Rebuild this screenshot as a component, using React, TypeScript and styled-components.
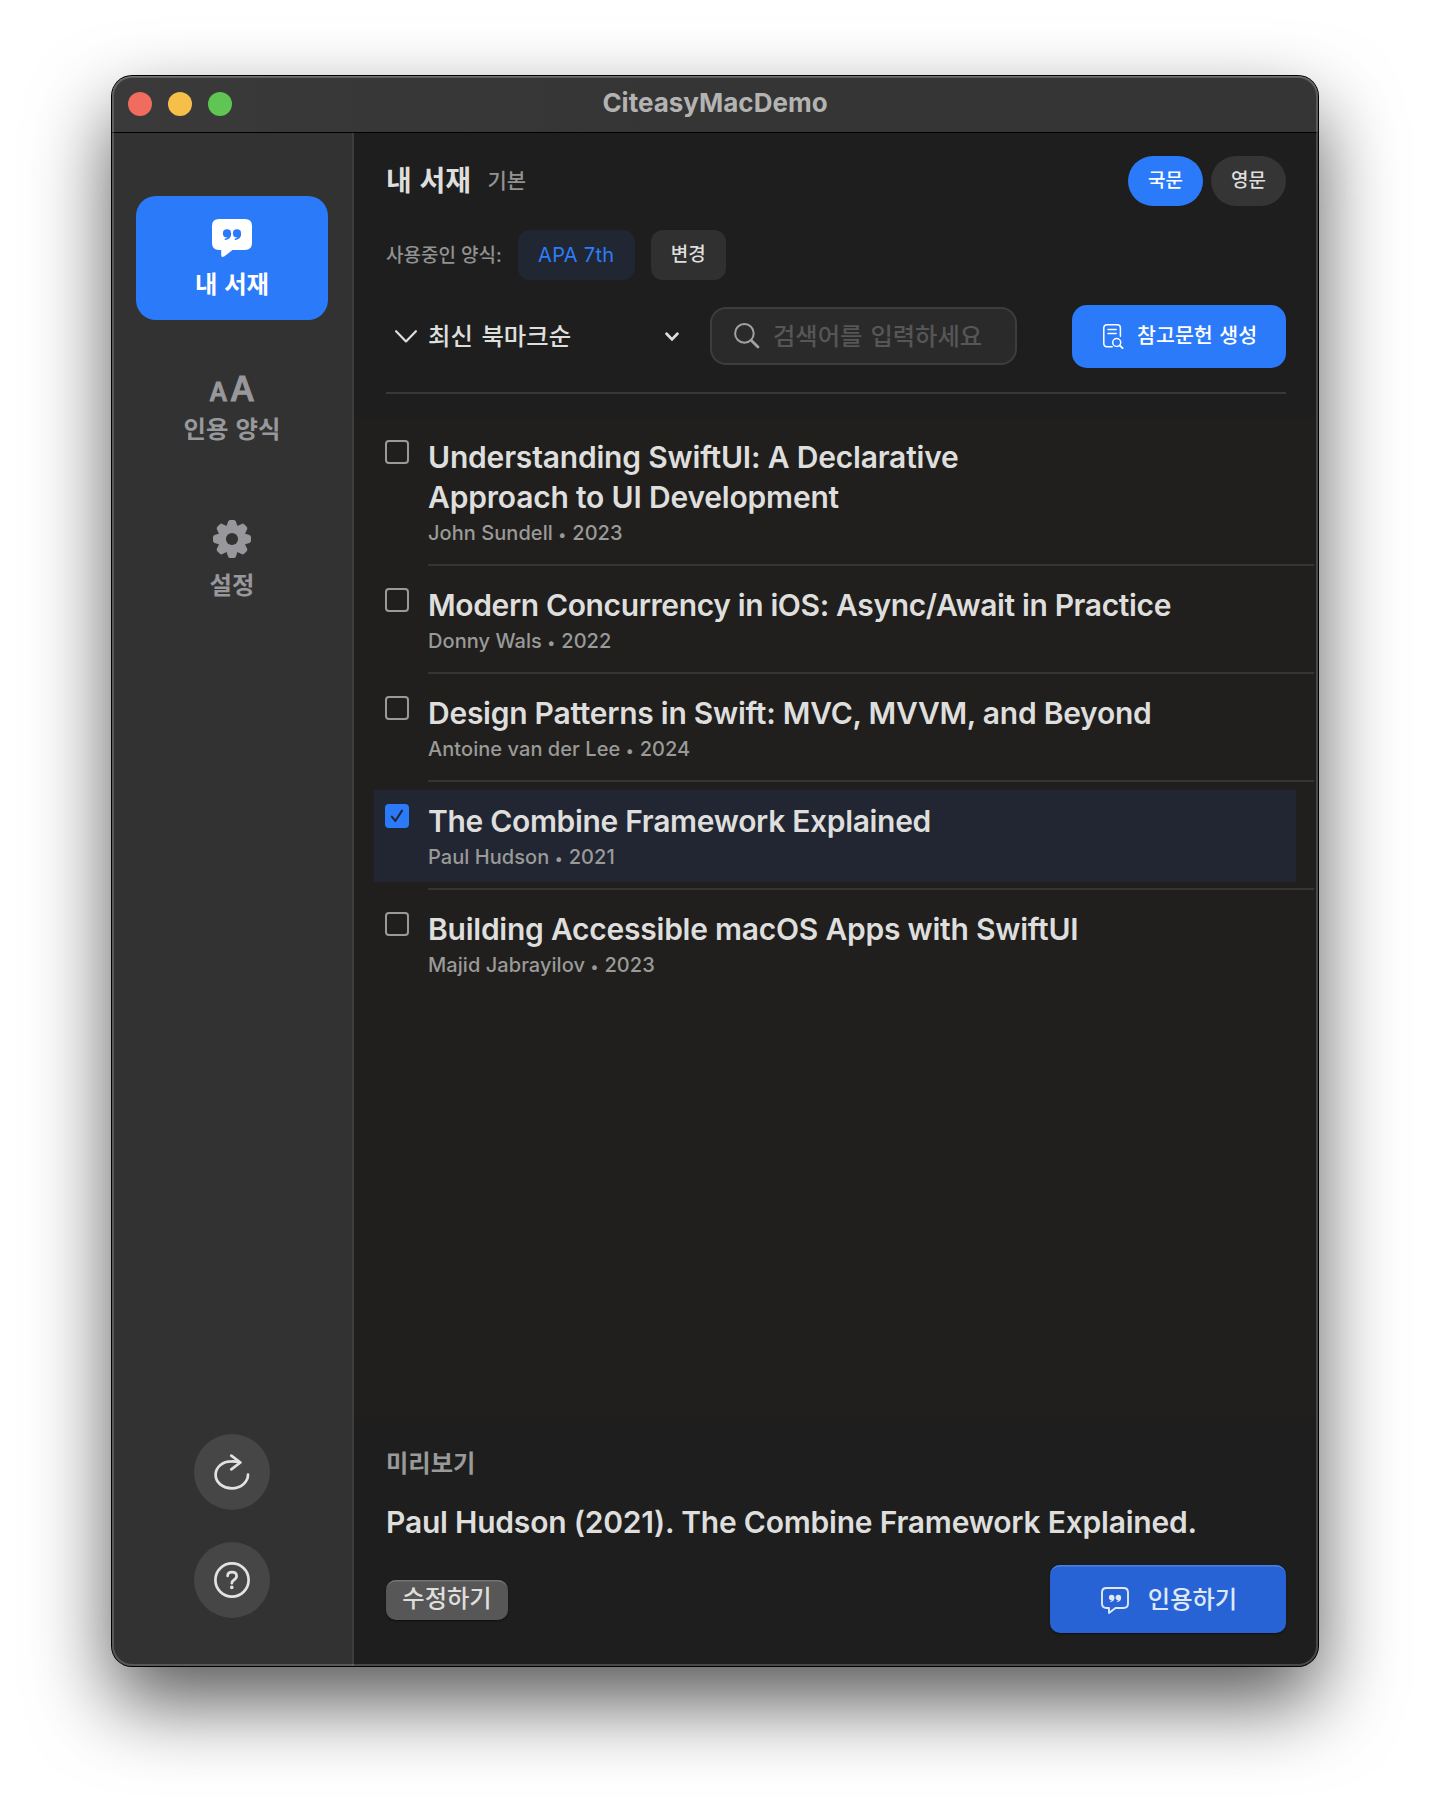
import React from "react";
import styled, { createGlobalStyle, css } from "styled-components";

const Global = createGlobalStyle`
  * { box-sizing: border-box; }
  html, body { margin: 0; padding: 0; background: #fff; }
  body {
    font-family: Inter, "Noto Sans CJK KR", sans-serif;
    color: #dededd;
    -webkit-font-smoothing: antialiased;
  }
  button, input { font: inherit; color: inherit; border: 0; margin: 0; padding: 0; background: none; }
  svg { display: block; flex: none; }
`;

const Desktop = styled.div`
  width: 1430px;
  height: 1814px;
  padding: 76px 112px 148px;
  overflow: hidden;
  background: #fff;
`;

const Window = styled.div`
  position: relative;
  width: 1206px;
  height: 1590px;
  display: flex;
  flex-direction: column;
  border-radius: 20px;
  background: #1e1e1e;
  box-shadow: 0 0 0 1px #000, 0 36px 80px rgba(0, 0, 0, 0.66);
  &::after {
    content: "";
    position: absolute;
    inset: 0;
    border-radius: 20px;
    pointer-events: none;
    box-shadow: inset 0 1px 0 rgba(255, 255, 255, 0.14), inset 0 0 0 2px rgba(255, 255, 255, 0.19);
  }
`;

const TitleBar = styled.header`
  height: 57px;
  flex: none;
  display: grid;
  grid-template-columns: 1fr auto 1fr;
  align-items: center;
  padding: 0 16px;
  border-radius: 20px 20px 0 0;
  border-bottom: 1px solid #000;
  background: linear-gradient(90deg, #3a3a3a, #353535 45%, #353535);
`;

const Lights = styled.div`
  display: flex;
  gap: 16px;
`;

const Light = styled.span<{ $color: string }>`
  width: 24px;
  height: 24px;
  border-radius: 50%;
  background: ${(p) => p.$color};
`;

const WindowTitle = styled.h1`
  margin: 0;
  padding-bottom: 3px;
  font-size: 26px;
  line-height: 32px;
  font-weight: 700;
  letter-spacing: 0;
  color: #b3b3b2;
`;

const Body = styled.div`
  flex: 1;
  min-height: 0;
  display: flex;
`;

const Sidebar = styled.nav`
  width: 242px;
  flex: none;
  display: flex;
  flex-direction: column;
  padding: 63px 24px 48px;
  gap: 24px;
  border-right: 2px solid #3e3e3e;
  border-radius: 0 0 0 20px;
  background: #323232;
`;

const NavItem = styled.button<{ $height: number; $gap: number; $active?: boolean }>`
  width: 192px;
  height: ${(p) => p.$height}px;
  display: flex;
  flex-direction: column;
  align-items: center;
  justify-content: flex-end;
  gap: ${(p) => p.$gap}px;
  padding-bottom: 19px;
  border-radius: 20px;
  font-size: 24.4px;
  line-height: 34px;
  font-weight: 600;
  word-spacing: 1px;
  color: #98989c;
  ${(p) =>
    p.$active &&
    css`
      background: #2b7af9;
      color: #fff;
      font-weight: 700;
    `}
`;

const LetterSizes = styled.span`
  display: flex;
  align-items: baseline;
  gap: 3px;
  line-height: 27px;
  height: 27px;
  font-weight: 500;
  -webkit-text-stroke: 1.2px currentColor;
  paint-order: stroke;
`;

const Letter = styled.span<{ $size: number }>`
  font-size: ${(p) => p.$size}px;
`;

const SidebarTools = styled.div`
  margin-top: auto;
  display: flex;
  flex-direction: column;
  align-items: center;
  gap: 32px;
`;

const RoundButton = styled.button`
  width: 76px;
  height: 76px;
  display: grid;
  place-items: center;
  border-radius: 50%;
  background: #464646;
  color: #e2e2e2;
`;

const Main = styled.main`
  flex: 1;
  min-width: 0;
  display: flex;
  flex-direction: column;
`;

const Header = styled.section`
  height: 285px;
  flex: none;
  display: flex;
  flex-direction: column;
  padding: 23px 32px 0;
`;

const Row = styled.div<{ $gap?: number; $height: number; $mt?: number }>`
  display: flex;
  align-items: center;
  height: ${(p) => p.$height}px;
  margin-top: ${(p) => p.$mt ?? 0}px;
  gap: ${(p) => p.$gap ?? 0}px;
`;

const Heading = styled.h2`
  margin: 0;
  font-size: 28px;
  line-height: 50px;
  font-weight: 700;
  word-spacing: 1px;
`;

const Muted = styled.span<{ $size: number }>`
  font-size: ${(p) => p.$size}px;
  line-height: 50px;
  font-weight: 500;
  color: #929291;
`;

const StyleLabel = styled(Muted)`
  padding-top: 1px;
`;

const Spacer = styled.div`
  flex: 1;
`;

const Pill = styled.button<{ $active?: boolean }>`
  width: 75px;
  height: 50px;
  border-radius: 25px;
  font-size: 19px;
  line-height: 50px;
  font-weight: 500;
  background: ${(p) => (p.$active ? "#2b7af9" : "#353535")};
  color: ${(p) => (p.$active ? "#fff" : "#dededd")};
`;

const Chip = styled.span<{ $width: number; $accent?: boolean }>`
  width: ${(p) => p.$width}px;
  height: 50px;
  border-radius: 12px;
  text-align: center;
  line-height: ${(p) => (p.$accent ? 51 : 50)}px;
  font-size: ${(p) => (p.$accent ? 20 : 19)}px;
  font-weight: ${(p) => (p.$accent ? 400 : 500)};
  letter-spacing: ${(p) => (p.$accent ? 0.3 : 0)}px;
  background: ${(p) => (p.$accent ? "#202733" : "#303030")};
  color: ${(p) => (p.$accent ? "#2e7cf6" : "#dededd")};
`;

const SortMenu = styled.button`
  width: 324px;
  height: 58px;
  display: flex;
  align-items: center;
  padding: 0 31px 0 9px;
  gap: 11px;
  font-size: 24.4px;
  line-height: 34px;
  font-weight: 500;
  word-spacing: 2px;
`;

const SortLabel = styled.span`
  padding-bottom: 2px;
`;

const SearchField = styled.label`
  width: 307px;
  height: 58px;
  margin-top: -1px;
  display: flex;
  align-items: center;
  gap: 13px;
  padding: 0 12px 0 22px;
  border: 2px solid #3d3d3d;
  border-radius: 16px;
  background: #2a2a2a;
  color: #a2a2a2;
`;

const SearchInput = styled.input`
  flex: 1;
  min-width: 0;
  height: 34px;
  font-size: 24.3px;
  line-height: 34px;
  font-weight: 500;
  word-spacing: 1.5px;
  outline: none;
  &::placeholder {
    color: #565656;
    opacity: 1;
  }
`;

const PrimaryButton = styled.button`
  width: 214px;
  height: 63px;
  margin-left: 55px;
  display: flex;
  align-items: center;
  gap: 13px;
  padding: 0 0 1px 31px;
  border-radius: 15px;
  font-size: 20.6px;
  font-weight: 500;
  word-spacing: 1px;
  line-height: 30px;
  white-space: nowrap;
  background: #2b7af9;
  color: #fff;
`;

const Rule = styled.hr`
  width: 100%;
  height: 2px;
  margin: 24px 0 0;
  border: 0;
  background: #383838;
`;

const List = styled.ul`
  flex: 1;
  min-height: 0;
  margin: 0;
  padding: 0;
  list-style: none;
  background: #201f1d;
`;

const Item = styled.li`
  padding: 8px 22px 6px 20px;
`;

const ItemInner = styled.div<{ $selected?: boolean }>`
  display: flex;
  gap: 19px;
  padding: 14px 12px 11px 11px;
  background: ${(p) => (p.$selected ? "#212632" : "transparent")};
`;

const Check = styled.span<{ $on?: boolean }>`
  width: 24px;
  height: 24px;
  flex: none;
  display: grid;
  place-items: center;
  border-radius: 4px;
  border: ${(p) => (p.$on ? "0" : "2px solid #9b9a99")};
  background: ${(p) => (p.$on ? "#2b7af9" : "transparent")};
  color: #212632;
`;

const ItemText = styled.div`
  display: flex;
  flex-direction: column;
  margin-top: -3px;
`;

const ItemTitle = styled.h3<{ $tracking: number }>`
  margin: 0;
  font-size: 30px;
  line-height: 40px;
  font-weight: 600;
  letter-spacing: ${(p) => p.$tracking}px;
  white-space: pre-line;
`;

const ItemMeta = styled.p`
  margin: 2px 0 0;
  height: 28px;
  font-size: 20px;
  line-height: 28px;
  letter-spacing: 0.06px;
  font-weight: 450;
  color: #9a9a98;
`;

const Dot = styled.span`
  font-size: 15px;
  line-height: 1;
  margin: 0 0.5px 0 0;
`;

const Separator = styled.li`
  height: 2px;
  margin: 0 4px 0 74px;
  background: #363533;
`;

const Preview = styled.footer`
  height: 250px;
  flex: none;
  display: flex;
  flex-direction: column;
  padding: 30px 32px 0;
`;

const PreviewLabel = styled.h4`
  margin: 0;
  font-size: 24.3px;
  line-height: 34px;
  font-weight: 600;
  color: #9a9a99;
`;

const Citation = styled.p`
  margin: 22px 0 0;
  font-size: 30px;
  line-height: 40px;
  font-weight: 600;
  letter-spacing: -0.21px;
  white-space: nowrap;
`;

const PreviewActions = styled.div`
  display: flex;
  align-items: center;
  justify-content: space-between;
  margin-top: 23px;
  height: 68px;
`;

const EditButton = styled.button`
  width: 122px;
  height: 40px;
  margin-top: 2px;
  border-radius: 10px;
  font-size: 24.3px;
  font-weight: 500;
  line-height: 36px;
  padding-bottom: 4px;
  background: #575757;
  box-shadow: inset 0 2px 0 -0.5px #747474, 0 1px 2px rgba(0, 0, 0, 0.5);
`;

const CiteButton = styled.button`
  width: 236px;
  height: 68px;
  display: flex;
  align-items: center;
  justify-content: center;
  gap: 19px;
  border-radius: 10px;
  font-size: 24.3px;
  font-weight: 500;
  line-height: 34px;
  padding: 0 0 1px 2px;
  background: #2863d6;
  color: #dfe8f9;
  box-shadow: inset 0 2px 0 -0.5px #4a80e4, 0 1px 2px rgba(0, 0, 0, 0.5);
  svg {
    margin-top: 4px;
  }
`;

const Quotes = () => (
  <>
    <circle cx="15" cy="14.4" r="4.1" />
    <path d="M19.1 14.2 C19.4 18 17 20.7 13.2 20.9 C12.4 20.9 12.4 19.8 13.2 19.6 C15 19.2 16 18 16.2 16.4 Z" />
    <circle cx="25" cy="14.4" r="4.1" />
    <path d="M29.1 14.2 C29.4 18 27 20.7 23.2 20.9 C22.4 20.9 22.4 19.8 23.2 19.6 C25 19.2 26 18 26.2 16.4 Z" />
  </>
);

const BubbleFilled = () => (
  <svg width="40" height="38" viewBox="0 0 40 38" fill="currentColor">
    <path d="M7 0 H33 Q40 0 40 7 V24 Q40 31 33 31 H20.5 L12.5 37.3 Q9.2 39 9.2 36 V31 H7 Q0 31 0 24 V7 Q0 0 7 0 Z" />
    <g fill="#2b7af9">
      <Quotes />
    </g>
  </svg>
);

const BubbleOutline = () => (
  <svg width="28" height="27" viewBox="0 0 28 27" fill="none" stroke="currentColor" strokeWidth="1.9" strokeLinejoin="round">
    <path d="M5.5 1 H22.5 Q27 1 27 5.5 V16.5 Q27 21 22.5 21 H14.5 L8 26 V21 H5.5 Q1 21 1 16.5 V5.5 Q1 1 5.5 1 Z" />
    <g fill="currentColor" stroke="none" transform="translate(0.6 0.9) scale(0.67)">
      <Quotes />
    </g>
  </svg>
);

const Gear = () => (
  <svg width="38" height="38" viewBox="-19 -19 38 38" fill="currentColor">
    <defs>
      <mask id="gear-hole">
        <rect x="-19" y="-19" width="38" height="38" fill="#fff" />
        <circle r="6.1" fill="#000" />
      </mask>
    </defs>
    <g mask="url(#gear-hole)">
      <circle r="14.2" />
      {[0, 45, 90, 135, 180, 225, 270, 315].map((a) => (
        <path key={a} transform={`rotate(${a})`} d="M-5.6 -12.5 L-3.9 -17.4 Q-3.4 -19 -1.8 -19 H1.8 Q3.4 -19 3.9 -17.4 L5.6 -12.5 Z" />
      ))}
    </g>
  </svg>
);

const Refresh = () => (
  <svg width="36" height="36" viewBox="0 0 36 36" fill="none" stroke="currentColor" strokeWidth="2.7" strokeLinecap="round" strokeLinejoin="round">
    <path d="M34 20.5 C34 28 27 34.3 18 34.3 C8.5 34.3 1.6 28.4 1.6 20.8 C1.6 13 8.5 7.4 17.5 7.4 Q21.5 7.2 25 8.2" />
    <path d="M17.3 1.6 L26.4 8.5 L17.3 15.3" />
  </svg>
);

const Help = () => (
  <svg width="36" height="36" viewBox="0 0 36 36" fill="none" stroke="currentColor" strokeWidth="2.7" strokeLinecap="round" strokeLinejoin="round">
    <circle cx="18" cy="18" r="16.6" />
    <path d="M13.6 13.9 C13.7 11.4 15.5 10.2 18 10.2 C20.7 10.2 22.6 11.6 22.6 14 C22.6 16 21.5 17 19.9 18 C18.4 18.9 17.8 19.7 17.8 21.2" />
    <circle cx="17.8" cy="25.4" r="1.8" fill="currentColor" stroke="none" />
  </svg>
);

const SearchIcon = () => (
  <svg width="26" height="26" viewBox="0 0 26 26" fill="none" stroke="currentColor" strokeLinecap="round">
    <circle cx="10.4" cy="10.4" r="9.3" strokeWidth="2" />
    <path d="M17.4 17.4 L24 24" strokeWidth="2.8" />
  </svg>
);

const WideChevron = () => (
  <svg width="22" height="13" viewBox="0 0 22 13" fill="none" stroke="currentColor" strokeWidth="2.2" strokeLinecap="round" strokeLinejoin="round">
    <path d="M1.1 1.2 L11 11.4 L20.9 1.2" />
  </svg>
);

const SmallChevron = () => (
  <svg width="14" height="10" viewBox="0 0 14 10" fill="none" stroke="currentColor" strokeWidth="2.8" strokeLinecap="round" strokeLinejoin="round">
    <path d="M1.6 1.8 L7 7.4 L12.4 1.8" />
  </svg>
);

const DocSearch = () => (
  <svg width="21" height="25" viewBox="0 0 21 25" fill="none" stroke="currentColor" strokeWidth="1.5" strokeLinecap="round" strokeLinejoin="round">
    <path d="M9.2 22.7 H4 Q0.8 22.7 0.8 19.5 V4 Q0.8 0.8 4 0.8 H14.2 Q17.4 0.8 17.4 4 V12.3" />
    <path d="M5 5.6 H13.2 M5 9.6 H13.2" />
    <circle cx="13.7" cy="18.5" r="4" />
    <path d="M16.7 21.5 L19.6 24.1" strokeWidth="1.8" />
  </svg>
);

const Tick = () => (
  <svg width="14" height="14" viewBox="0 0 14 14" fill="none" stroke="currentColor" strokeWidth="2" strokeLinecap="round" strokeLinejoin="round">
    <path d="M1.8 7.6 L5.4 12 L12 1.6" />
  </svg>
);

const papers = [
  { title: "Understanding SwiftUI: A Declarative\nApproach to UI Development", author: "John Sundell", year: 2023, tracking: -0.19 },
  { title: "Modern Concurrency in iOS: Async/Await in Practice", author: "Donny Wals", year: 2022, tracking: -0.37 },
  { title: "Design Patterns in Swift: MVC, MVVM, and Beyond", author: "Antoine van der Lee", year: 2024, tracking: -0.26 },
  { title: "The Combine Framework Explained", author: "Paul Hudson", year: 2021, tracking: -0.32, selected: true },
  { title: "Building Accessible macOS Apps with SwiftUI", author: "Majid Jabrayilov", year: 2023, tracking: -0.24 },
];

export default function App() {
  return (
    <Desktop>
      <Global />
      <Window>
        <TitleBar>
          <Lights>
            <Light $color="#f06c5e" />
            <Light $color="#f6bf4a" />
            <Light $color="#5fc553" />
          </Lights>
          <WindowTitle>CiteasyMacDemo</WindowTitle>
        </TitleBar>
        <Body>
          <Sidebar>
            <NavItem $active $height={124} $gap={10}>
              <BubbleFilled />
              내 서재
            </NavItem>
            <NavItem $height={121} $gap={10}>
              <LetterSizes>
                <Letter $size={25}>A</Letter>
                <Letter $size={34}>A</Letter>
              </LetterSizes>
              인용 양식
            </NavItem>
            <NavItem $height={132} $gap={10}>
              <Gear />
              설정
            </NavItem>
            <SidebarTools>
              <RoundButton aria-label="새로고침">
                <Refresh />
              </RoundButton>
              <RoundButton aria-label="도움말">
                <Help />
              </RoundButton>
            </SidebarTools>
          </Sidebar>
          <Main>
            <Header>
              <Row $height={50} $gap={11}>
                <Heading>내 서재</Heading>
                <Muted $size={21}>&nbsp;기본</Muted>
                <Spacer />
                <Row $height={50} $gap={8}>
                  <Pill $active>국문</Pill>
                  <Pill>영문</Pill>
                </Row>
              </Row>
              <Row $height={50} $mt={24} $gap={16}>
                <StyleLabel $size={19}>사용중인 양식:</StyleLabel>
                <Chip $width={117} $accent>
                  APA 7th
                </Chip>
                <Chip $width={75}>변경</Chip>
              </Row>
              <Row $height={63} $mt={25}>
                <SortMenu>
                  <WideChevron />
                  <SortLabel>최신 북마크순</SortLabel>
                  <Spacer />
                  <SmallChevron />
                </SortMenu>
                <SearchField>
                  <SearchIcon />
                  <SearchInput placeholder="검색어를 입력하세요" />
                </SearchField>
                <PrimaryButton>
                  <DocSearch />
                  참고문헌 생성
                </PrimaryButton>
              </Row>
              <Rule />
            </Header>
            <List>
              {papers.map((p, i) => (
                <React.Fragment key={p.title}>
                  {i > 0 && <Separator />}
                  <Item>
                    <ItemInner $selected={p.selected}>
                      <Check $on={p.selected}>{p.selected && <Tick />}</Check>
                      <ItemText>
                        <ItemTitle $tracking={p.tracking}>{p.title}</ItemTitle>
                        <ItemMeta>
                          {p.author} <Dot>•</Dot> {p.year}
                        </ItemMeta>
                      </ItemText>
                    </ItemInner>
                  </Item>
                </React.Fragment>
              ))}
            </List>
            <Preview>
              <PreviewLabel>미리보기</PreviewLabel>
              <Citation>Paul Hudson (2021). The Combine Framework Explained.</Citation>
              <PreviewActions>
                <EditButton>수정하기</EditButton>
                <CiteButton>
                  <BubbleOutline />
                  인용하기
                </CiteButton>
              </PreviewActions>
            </Preview>
          </Main>
        </Body>
      </Window>
    </Desktop>
  );
}
